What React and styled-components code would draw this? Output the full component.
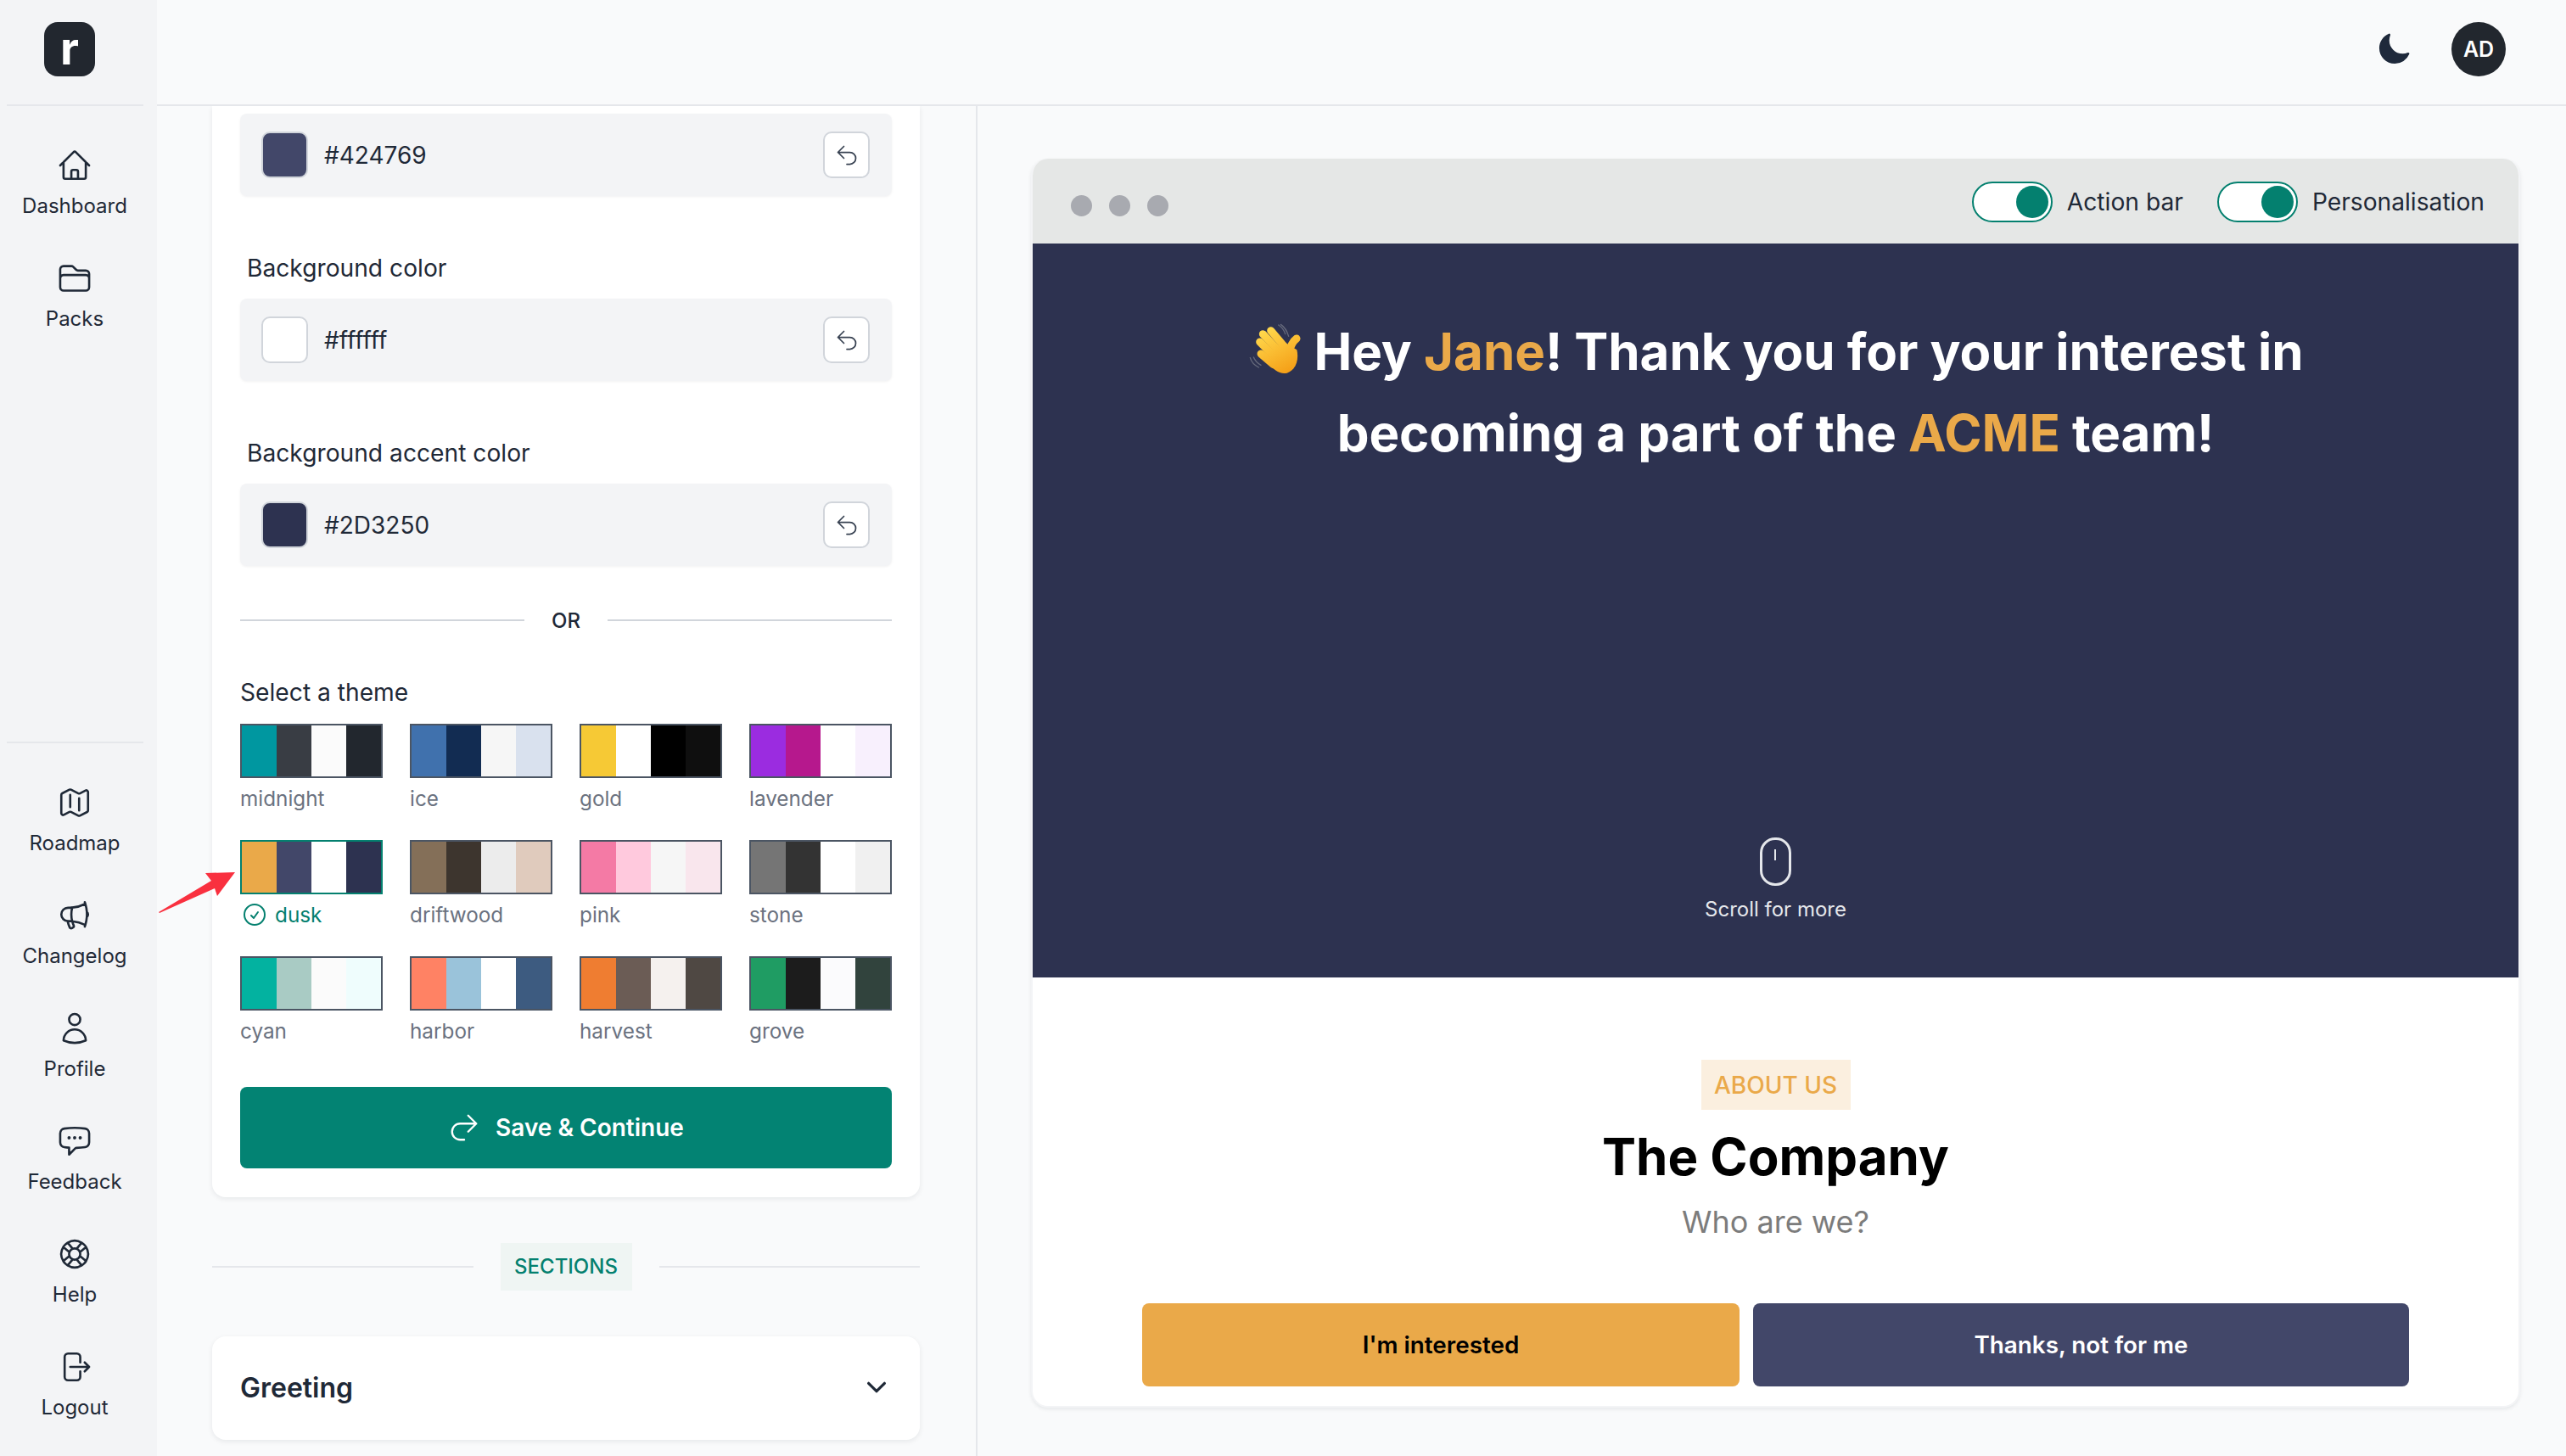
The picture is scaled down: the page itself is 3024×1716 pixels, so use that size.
import React from "react";
import styled, { createGlobalStyle } from "styled-components";
import {
  HiOutlineHome, HiOutlineFolder, HiOutlineMap, HiOutlineMegaphone, HiOutlineUser,
  HiOutlineChatBubbleLeftEllipsis, HiOutlineLifebuoy, HiOutlineArrowRightOnRectangle,
  HiOutlineArrowUturnLeft, HiOutlineArrowUturnRight, HiMoon, HiOutlineCheckCircle, HiOutlineChevronDown,
} from "react-icons/hi2";

const Global = createGlobalStyle`
  * { box-sizing: border-box; }
  html, body { margin: 0; padding: 0; height: 1716px; overflow: hidden; background: #f9fafb; }
  body { font-family: Inter, "Liberation Sans", sans-serif; color: #1f2937; -webkit-font-smoothing: antialiased; }
`;

const Shell = styled.div`
  position: relative;
  display: flex;
  width: 3024px;
  height: 1716px;
  overflow: hidden;
`;
const Sidebar = styled.nav`
  width: 185px;
  flex: none;
  background: #f3f4f6;
  display: flex;
  flex-direction: column;
`;
const LogoBar = styled.div`
  height: 125px;
  margin: 0 16px 0 8px;
  border-bottom: 2px solid #e5e7eb;
  padding: 26px 0 0 44px;
  flex: none;
`;
const Logo = styled.div`
  width: 60px;
  height: 64px;
  border-radius: 16px;
  background: #22272f;
  color: #fff;
  font-weight: 700;
  font-size: 54px;
  line-height: 62px;
  text-align: center;
`;
const NavGroup = styled.div`
  display: flex;
  flex-direction: column;
  padding: ${(p) => p.$top}px 9px 0 0;
  margin-bottom: ${(p) => p.$bottom || 0}px;
`;
const NavDivider = styled.div`
  height: 2px;
  margin: 0 16px 0 8px;
  background: #e5e7eb;
`;
const Spacer = styled.div`
  flex: 1;
`;
const NavItem = styled.a`
  height: 133px;
  display: flex;
  flex-direction: column;
  align-items: center;
  color: #1f2937;
  font-size: 24px;
  line-height: 34px;
  svg { width: 42px; height: 42px; margin-bottom: 10px; stroke-width: 1.5; }
`;
const Main = styled.div`
  flex: 1;
  display: flex;
  flex-direction: column;
  min-width: 0;
`;
const TopBar = styled.header`
  height: 125px;
  flex: none;
  border-bottom: 2px solid #e5e7eb;
  display: flex;
  justify-content: flex-end;
  padding: 26px 71px 0 0;
  gap: 47px;
`;
const MoonButton = styled.div`
  margin-top: 11px;
  color: #1e293b;
  svg { width: 42px; height: 42px; display: block; }
`;
const Avatar = styled.div`
  width: 64px;
  height: 64px;
  border-radius: 50%;
  background: #22272e;
  color: #fff;
  font-weight: 600;
  font-size: 25px;
  display: flex;
  align-items: center;
  justify-content: center;
`;
const Body = styled.div`
  flex: 1;
  display: flex;
  min-height: 0;
`;
const EditorPane = styled.div`
  width: 967px;
  flex: none;
  border-right: 2px solid #e5e7eb;
  padding: 0 66px 0 65px;
  overflow: hidden;
`;
const Card = styled.section`
  background: #fff;
  border-radius: 0 0 16px 16px;
  box-shadow: 0 2px 6px rgba(17, 24, 39, 0.08);
  padding: 9px 33px 34px;
`;
const FieldGroup = styled.div`
  margin-top: ${(p) => p.$top}px;
`;
const FieldLabel = styled.div`
  font-size: 28.2px;
  line-height: 40px;
  padding-left: 8px;
  margin-bottom: 16px;
  color: #1f2937;
`;
const Field = styled.div`
  height: 97px;
  border-radius: 8px;
  background: #f3f4f6;
  box-shadow: 0 1px 3px rgba(17, 24, 39, 0.06);
  display: flex;
  align-items: center;
  padding: 0 26px 0 25px;
  gap: 19px;
`;
const ColorChip = styled.div`
  width: 55px;
  height: 55px;
  border-radius: 10px;
  background: ${(p) => p.$color};
  border: 2px solid #d1d5db;
`;
const HexValue = styled.div`
  flex: 1;
  font-size: 28px;
  color: #1f2937;
`;
const ResetButton = styled.button`
  width: 55px;
  height: 55px;
  padding: 0;
  border-radius: 10px;
  background: #fff;
  border: 2px solid #d1d5db;
  color: #374151;
  display: flex;
  align-items: center;
  justify-content: center;
  svg { width: 28px; height: 28px; }
`;
const OrRow = styled.div`
  display: flex;
  align-items: center;
  gap: 32px;
  height: 34px;
  margin-top: 47px;
  font-size: 24px;
  font-weight: 500;
  color: #1f2937;
  &::before, &::after { content: ""; flex: 1; height: 2px; background: #d1d5db; }
`;
const ThemeTitle = styled.div`
  font-size: 28.2px;
  line-height: 40px;
  margin-top: 48px;
  margin-bottom: 17px;
  color: #1f2937;
`;
const ThemeGrid = styled.div`
  display: grid;
  grid-template-columns: repeat(4, 168px);
  column-gap: 32px;
  row-gap: 32px;
`;
const ThemeItem = styled.div`
  display: flex;
  flex-direction: column;
`;
const Palette = styled.div`
  height: 64px;
  display: flex;
  border: 2px solid ${(p) => (p.$active ? "#04806f" : "#4b5563")};
`;
const PaletteBar = styled.div`
  flex: 1;
  background: ${(p) => p.$color};
`;
const ThemeName = styled.div`
  margin-top: 7px;
  height: 34px;
  display: flex;
  align-items: center;
  gap: 8px;
  font-size: 24.3px;
  line-height: 34px;
  color: ${(p) => (p.$active ? "#04806f" : "#6b7280")};
  svg { width: 32px; height: 32px; margin-left: 1px; }
`;
const SaveButton = styled.button`
  width: 100%;
  height: 96px;
  margin-top: 49px;
  border: 0;
  border-radius: 8px;
  background: #038373;
  color: #fff;
  font-family: inherit;
  font-size: 28px;
  font-weight: 600;
  display: flex;
  align-items: center;
  justify-content: center;
  gap: 18px;
  svg { width: 38px; height: 38px; }
`;
const SectionsRow = styled.div`
  display: flex;
  align-items: center;
  gap: 32px;
  margin-top: 54px;
  &::before, &::after { content: ""; flex: 1; height: 2px; background: #e5e7eb; }
`;
const SectionsBadge = styled.div`
  height: 56px;
  width: 155px;
  background: #eff5f3;
  color: #04806f;
  font-size: 24px;
  font-weight: 500;
  padding-bottom: 2px;
  display: flex;
  align-items: center;
  justify-content: center;
`;
const AccordionCard = styled.section`
  margin-top: 54px;
  height: 122px;
  background: #fff;
  border-radius: 16px;
  box-shadow: 0 2px 6px rgba(17, 24, 39, 0.08);
  display: flex;
  align-items: center;
  justify-content: space-between;
  padding: 0 36px 2px 33px;
  font-size: 32px;
  font-weight: 600;
  color: #1f2937;
  svg { width: 30px; height: 30px; stroke-width: 2.6; }
`;
const PreviewPane = styled.div`
  flex: 1;
  padding: 62px 54px 0 63px;
  min-width: 0;
`;
const BrowserWindow = styled.div`
  height: 1472px;
  background: #fff;
  border-radius: 20px;
  border: 2px solid #f3f4f6;
  border-top: 0;
  box-shadow: 0 2px 4px rgba(17, 24, 39, 0.08);
  overflow: hidden;
  display: flex;
  flex-direction: column;
`;
const TitleBar = styled.div`
  height: 100px;
  flex: none;
  background: #e5e7e6;
  display: flex;
  align-items: center;
  padding: 2px 40px 0 45px;
`;
const Dots = styled.div`
  display: flex;
  gap: 20px;
  margin-top: 8px;
  flex: 1;
`;
const Dot = styled.span`
  width: 25px;
  height: 25px;
  border-radius: 50%;
  background: #a8aab0;
`;
const ToggleGroup = styled.div`
  display: flex;
  align-items: center;
  gap: 17px;
  margin-left: 40px;
  font-size: 28.2px;
  color: #1f2937;
`;
const Toggle = styled.div`
  width: 95px;
  height: 48px;
  border-radius: 24px;
  border: 2px solid #04806f;
  background: #fff;
  display: flex;
  justify-content: flex-end;
  align-items: center;
  padding-right: 3px;
  &::after { content: ""; width: 38px; height: 38px; border-radius: 50%; background: #04806f; }
`;
const Hero = styled.div`
  height: 865px;
  flex: none;
  background: #2d3250;
  color: #fff;
  display: flex;
  flex-direction: column;
  align-items: center;
  justify-content: space-between;
  padding: 79px 0 63px;
`;
const Headline = styled.h1`
  margin: 0;
  font-size: 60px;
  line-height: 96px;
  font-weight: 700;
  letter-spacing: -0.05px;
  text-align: center;
`;
const Accent = styled.span`
  color: #eaa949;
`;
const Wave = styled.svg`
  width: 65px;
  height: 65px;
  display: inline-block;
  vertical-align: -8px;
  margin-right: 13px;
`;
const ScrollHint = styled.div`
  display: flex;
  flex-direction: column;
  align-items: center;
  gap: 11px;
  font-size: 24px;
  line-height: 34px;
  color: #e5e7eb;
`;
const Mouse = styled.div`
  width: 37px;
  height: 57px;
  border: 3px solid #e5e7eb;
  border-radius: 18px;
  display: flex;
  justify-content: center;
  padding-top: 11px;
  &::after { content: ""; width: 2px; height: 13px; background: #e5e7eb; }
`;
const About = styled.div`
  flex: 1;
  display: flex;
  flex-direction: column;
  align-items: center;
  padding-top: 97px;
`;
const AboutBadge = styled.div`
  width: 176px;
  height: 59px;
  background: #fbefdf;
  color: #eaa949;
  font-size: 28px;
  font-weight: 500;
  display: flex;
  align-items: center;
  justify-content: center;
`;
const AboutTitle = styled.h2`
  margin: 19px 0 0;
  font-size: 60px;
  line-height: 72px;
  font-weight: 700;
  color: #000;
`;
const AboutSub = styled.div`
  margin-top: 16px;
  font-size: 36px;
  line-height: 50px;
  color: #7c7c7c;
`;
const Actions = styled.div`
  display: flex;
  gap: 16px;
  margin-top: 71px;
`;
const ActionButton = styled.button`
  width: ${(p) => p.$w}px;
  height: 98px;
  border: 0;
  border-radius: 8px;
  background: ${(p) => p.$bg};
  color: ${(p) => p.$fg};
  font-family: inherit;
  font-size: 27.8px;
  font-weight: 600;
`;
const Annotation = styled.svg`
  position: absolute;
  left: 180px;
  top: 1020px;
  width: 105px;
  height: 62px;
`;

const swatch = ({ color }) => (
  <Field>
    <ColorChip $color={color.chip} />
    <HexValue>{color.text}</HexValue>
    <ResetButton><HiOutlineArrowUturnLeft /></ResetButton>
  </Field>
);

const themes = [
  ["midnight", "#0097a0", "#393d44", "#fbfbfb", "#22272e"],
  ["ice", "#4071ad", "#122c52", "#f6f6f6", "#d9e1ee"],
  ["gold", "#f6c935", "#ffffff", "#000000", "#0f0f0f"],
  ["lavender", "#9b2ce0", "#b6188d", "#ffffff", "#f8f0fd"],
  ["dusk", "#eaa949", "#424769", "#ffffff", "#2d3250"],
  ["driftwood", "#846f58", "#3d352e", "#ececec", "#e0cbbd"],
  ["pink", "#f47aa5", "#ffc9dd", "#f6f6f6", "#f9e6ed"],
  ["stone", "#757575", "#333333", "#ffffff", "#f0f0f0"],
  ["cyan", "#03b2a0", "#a9cbc4", "#fbfbfb", "#effdfd"],
  ["harbor", "#ff8264", "#9ac3da", "#ffffff", "#3d5b80"],
  ["harvest", "#ef7d31", "#6b5c55", "#f5f1ee", "#4f4843"],
  ["grove", "#1f9c63", "#1c1c1c", "#fbfbfd", "#31433d"],
];

const topNav = [
  [HiOutlineHome, "Dashboard"],
  [HiOutlineFolder, "Packs"],
];
const bottomNav = [
  [HiOutlineMap, "Roadmap"],
  [HiOutlineMegaphone, "Changelog"],
  [HiOutlineUser, "Profile"],
  [HiOutlineChatBubbleLeftEllipsis, "Feedback"],
  [HiOutlineLifebuoy, "Help"],
  [HiOutlineArrowRightOnRectangle, "Logout"],
];

const Nav = ({ items }) =>
  items.map(([Icon, label]) => (
    <NavItem key={label}>
      <Icon />
      {label}
    </NavItem>
  ));

const WaveIcon = () => (
  <Wave viewBox="30 30 195 195" aria-hidden="true">
    <defs>
      <linearGradient id="hand" gradientUnits="userSpaceOnUse" x1="100" y1="60" x2="185" y2="215">
        <stop offset="0" stopColor="#ffd64a" />
        <stop offset="1" stopColor="#f49c14" />
      </linearGradient>
    </defs>
    <g stroke="url(#hand)" strokeWidth="27" strokeLinecap="round" fill="none">
      <path d="M113 62 L172 132" />
      <path d="M85 74 L150 144" />
      <path d="M74 102 L132 160" />
      <path d="M78 144 L122 182" />
      <path d="M204 90 C190 100 180 120 176 150" />
    </g>
    <path d="M105 155 L165 105 L205 130 C212 160 205 200 170 212 C145 218 122 200 105 178 Z" fill="url(#hand)" />
    <path d="M140 42 C152 50 160 60 164 74 M148 40 C160 48 170 62 176 82" fill="none" stroke="#666a7c" strokeWidth="4" strokeLinecap="round" />
    <path d="M40 158 C44 172 54 184 70 192 M52 156 C56 166 64 176 78 184" fill="none" stroke="#666a7c" strokeWidth="4" strokeLinecap="round" />
  </Wave>
);

export default function App() {
  return (
    <Shell>
      <Global />
      <Sidebar>
        <LogoBar><Logo>r</Logo></LogoBar>
        <NavGroup $top={49}><Nav items={topNav} /></NavGroup>
        <Spacer />
        <NavDivider />
        <NavGroup $top={49} $bottom={-7}><Nav items={bottomNav} /></NavGroup>
      </Sidebar>
      <Main>
        <TopBar>
          <MoonButton><HiMoon /></MoonButton>
          <Avatar>AD</Avatar>
        </TopBar>
        <Body>
          <EditorPane>
            <Card>
              {swatch({ color: { chip: "#424769", text: "#424769" } })}
              <FieldGroup $top={65}>
                <FieldLabel>Background color</FieldLabel>
                {swatch({ color: { chip: "#ffffff", text: "#ffffff" } })}
              </FieldGroup>
              <FieldGroup $top={65}>
                <FieldLabel>Background accent color</FieldLabel>
                {swatch({ color: { chip: "#2d3250", text: "#2D3250" } })}
              </FieldGroup>
              <OrRow>OR</OrRow>
              <ThemeTitle>Select a theme</ThemeTitle>
              <ThemeGrid>
                {themes.map(([name, ...colors]) => {
                  const active = name === "dusk";
                  return (
                    <ThemeItem key={name}>
                      <Palette $active={active}>
                        {colors.map((c, i) => <PaletteBar key={i} $color={c} />)}
                      </Palette>
                      <ThemeName $active={active}>
                        {active && <HiOutlineCheckCircle />}
                        {name}
                      </ThemeName>
                    </ThemeItem>
                  );
                })}
              </ThemeGrid>
              <SaveButton><HiOutlineArrowUturnRight />Save &amp; Continue</SaveButton>
            </Card>
            <SectionsRow><SectionsBadge>SECTIONS</SectionsBadge></SectionsRow>
            <AccordionCard>Greeting<HiOutlineChevronDown /></AccordionCard>
          </EditorPane>
          <PreviewPane>
            <BrowserWindow>
              <TitleBar>
                <Dots><Dot /><Dot /><Dot /></Dots>
                <ToggleGroup><Toggle />Action bar</ToggleGroup>
                <ToggleGroup><Toggle />Personalisation</ToggleGroup>
              </TitleBar>
              <Hero>
                <Headline>
                  <WaveIcon />Hey <Accent>Jane</Accent>! Thank you for your interest in<br />
                  becoming a part of the <Accent>ACME</Accent> team!
                </Headline>
                <ScrollHint><Mouse />Scroll for more</ScrollHint>
              </Hero>
              <About>
                <AboutBadge>ABOUT US</AboutBadge>
                <AboutTitle>The Company</AboutTitle>
                <AboutSub>Who are we?</AboutSub>
                <Actions>
                  <ActionButton $w={704} $bg="#eaa949" $fg="#000">I'm interested</ActionButton>
                  <ActionButton $w={773} $bg="#424769" $fg="#fff">Thanks, not for me</ActionButton>
                </Actions>
              </About>
            </BrowserWindow>
          </PreviewPane>
        </Body>
      </Main>
      <Annotation viewBox="180 1020 105 62" aria-hidden="true">
        <path d="M187 1075 L249 1038 L242 1029 L277 1028 L256 1056 L253 1047 L188 1076 Z" fill="#f9303f" />
      </Annotation>
    </Shell>
  );
}
